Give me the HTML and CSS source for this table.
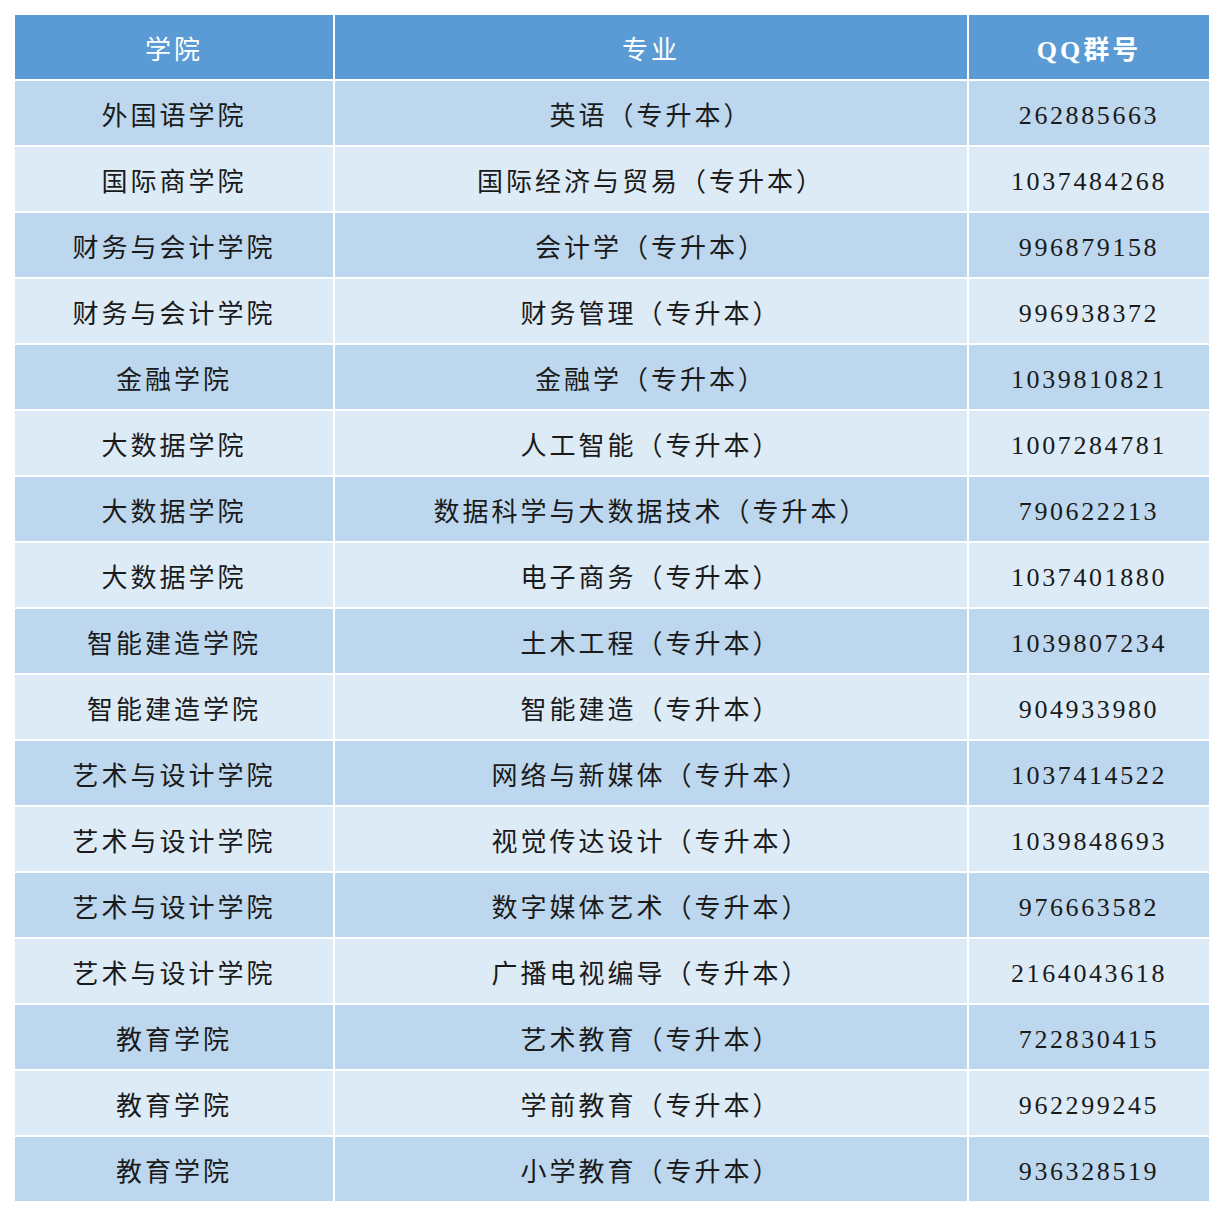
FILE: index.html
```html
<!DOCTYPE html>
<html lang="zh-CN">
<head>
<meta charset="utf-8">
<title>专升本 QQ群</title>
<link rel="stylesheet" href="styles.css">
</head>
<body>
<table class="groups">
  <thead>
    <tr><th class="c1">学院</th><th class="c2">专业</th><th class="c3">QQ群号</th></tr>
  </thead>
  <tbody>
    <tr><td>外国语学院</td><td>英语（专升本）</td><td class="num">262885663</td></tr>
    <tr><td>国际商学院</td><td>国际经济与贸易（专升本）</td><td class="num">1037484268</td></tr>
    <tr><td>财务与会计学院</td><td>会计学（专升本）</td><td class="num">996879158</td></tr>
    <tr><td>财务与会计学院</td><td>财务管理（专升本）</td><td class="num">996938372</td></tr>
    <tr><td>金融学院</td><td>金融学（专升本）</td><td class="num">1039810821</td></tr>
    <tr><td>大数据学院</td><td>人工智能（专升本）</td><td class="num">1007284781</td></tr>
    <tr><td>大数据学院</td><td>数据科学与大数据技术（专升本）</td><td class="num">790622213</td></tr>
    <tr><td>大数据学院</td><td>电子商务（专升本）</td><td class="num">1037401880</td></tr>
    <tr><td>智能建造学院</td><td>土木工程（专升本）</td><td class="num">1039807234</td></tr>
    <tr><td>智能建造学院</td><td>智能建造（专升本）</td><td class="num">904933980</td></tr>
    <tr><td>艺术与设计学院</td><td>网络与新媒体（专升本）</td><td class="num">1037414522</td></tr>
    <tr><td>艺术与设计学院</td><td>视觉传达设计（专升本）</td><td class="num">1039848693</td></tr>
    <tr><td>艺术与设计学院</td><td>数字媒体艺术（专升本）</td><td class="num">976663582</td></tr>
    <tr><td>艺术与设计学院</td><td>广播电视编导（专升本）</td><td class="num">2164043618</td></tr>
    <tr><td>教育学院</td><td>艺术教育（专升本）</td><td class="num">722830415</td></tr>
    <tr><td>教育学院</td><td>学前教育（专升本）</td><td class="num">962299245</td></tr>
    <tr><td>教育学院</td><td>小学教育（专升本）</td><td class="num">936328519</td></tr>
  </tbody>
</table>
</body>
</html>
```
FILE: styles.css
```css
html, body {
  margin: 0;
  padding: 0;
  background: #ffffff;
}
body {
  padding: 13px;
  font-family: "Liberation Serif", "Noto Sans CJK SC", serif;
}
.groups {
  border-collapse: separate;
  border-spacing: 2px;
  table-layout: fixed;
  width: 1198px;
}
.groups th,
.groups td {
  box-sizing: border-box;
  height: 64px;
  padding: 0;
  text-align: center;
  vertical-align: middle;
  font-size: 26px;
  letter-spacing: 3px;
  color: #1a1a1a;
  font-weight: normal;
}
.groups th {
  background: #5b9bd5;
  color: #ffffff;
}
.groups th.c3 {
  font-weight: bold;
}
.c1 { width: 318px; }
.c2 { width: 632px; }
.c3 { width: 240px; }
.groups tbody tr:nth-child(odd) td {
  background: #bdd7ee;
}
.groups tbody tr:nth-child(even) td {
  background: #ddebf7;
}
.groups td.num {
  letter-spacing: 2.6px;
  padding-top: 5px;
}
```
